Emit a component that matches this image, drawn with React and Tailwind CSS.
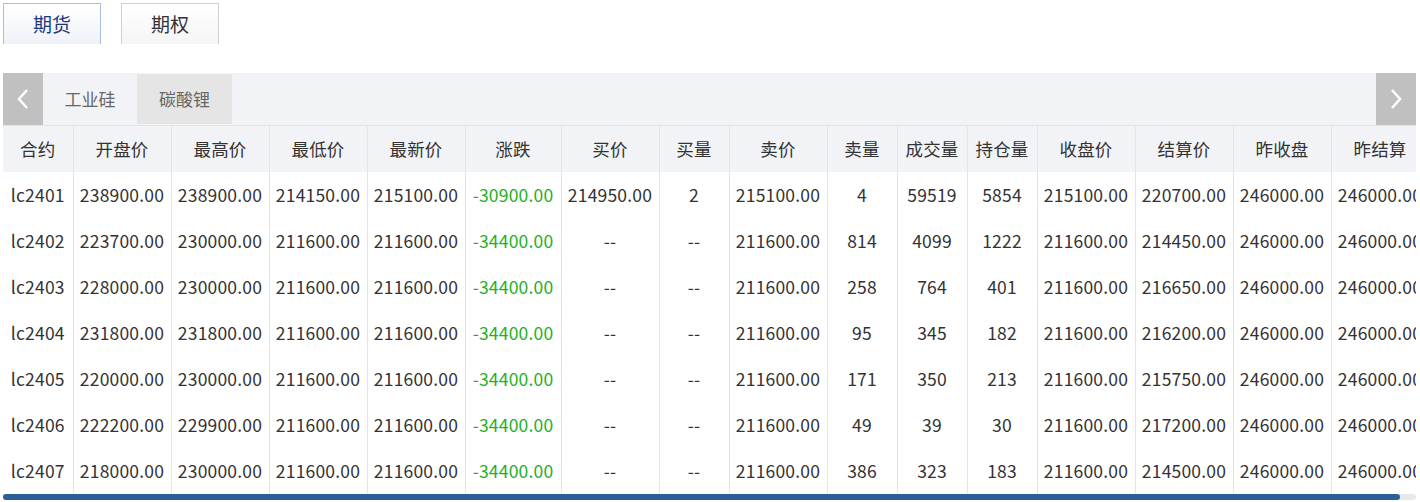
import React from "react";

const cols = [
  ["合约", 70], ["开盘价", 98], ["最高价", 98], ["最低价", 98], ["最新价", 98], ["涨跌", 96], ["买价", 98], ["买量", 70],
  ["卖价", 98], ["卖量", 70], ["成交量", 70], ["持仓量", 70], ["收盘价", 98], ["结算价", 98], ["昨收盘", 98], ["昨结算", 98],
];
const rows = [
  ["lc2401","238900.00","238900.00","214150.00","215100.00","-30900.00","214950.00","2","215100.00","4","59519","5854","215100.00","220700.00","246000.00","246000.00"],
  ["lc2402","223700.00","230000.00","211600.00","211600.00","-34400.00","--","--","211600.00","814","4099","1222","211600.00","214450.00","246000.00","246000.00"],
  ["lc2403","228000.00","230000.00","211600.00","211600.00","-34400.00","--","--","211600.00","258","764","401","211600.00","216650.00","246000.00","246000.00"],
  ["lc2404","231800.00","231800.00","211600.00","211600.00","-34400.00","--","--","211600.00","95","345","182","211600.00","216200.00","246000.00","246000.00"],
  ["lc2405","220000.00","230000.00","211600.00","211600.00","-34400.00","--","--","211600.00","171","350","213","211600.00","215750.00","246000.00","246000.00"],
  ["lc2406","222200.00","229900.00","211600.00","211600.00","-34400.00","--","--","211600.00","49","39","30","211600.00","217200.00","246000.00","246000.00"],
  ["lc2407","218000.00","230000.00","211600.00","211600.00","-34400.00","--","--","211600.00","386","323","183","211600.00","214500.00","246000.00","246000.00"],
];

export default function App() {
  return (
    <div className="w-[1420px] h-[502px] bg-white text-[#333] overflow-hidden" style={{ fontFamily: '"Noto Sans CJK SC","Noto Sans",sans-serif' }}>
      <div className="flex gap-5 pl-[3px] pt-[3px] h-[44px]">
        <div className="w-[98px] h-[41px] border border-b-0 border-[#a7bde0] bg-gradient-to-b from-white to-[#eef2f8] flex items-center justify-center text-[19px] text-[#1d3a7a]">期货</div>
        <div className="w-[98px] h-[41px] border border-b-0 border-[#d0d0d0] bg-gradient-to-b from-white to-[#f5f5f5] flex items-center justify-center text-[19px] text-[#333]">期权</div>
      </div>
      <div className="ml-[3px] mt-[29px] w-[1413px]">
        <div className="flex h-[53px] bg-[#f2f3f7] border-b border-[#e4e4e4]">
          <div className="w-[40px] bg-[#c0c0c0] flex items-center justify-center">
            <svg width="14" height="22" viewBox="0 0 14 22"><path d="M11 2 3 11l8 9" stroke="#fff" strokeWidth="2.5" fill="none" /></svg>
          </div>
          <div className="w-[94px] flex items-center justify-center text-[17px] text-[#666]">工业硅</div>
          <div className="w-[95px] flex items-center justify-center text-[17px] text-[#666] bg-[#e5e5e5] my-px">碳酸锂</div>
          <div className="flex-1" />
          <div className="w-[40px] bg-[#c0c0c0] flex items-center justify-center">
            <svg width="14" height="22" viewBox="0 0 14 22"><path d="M3 2l8 9-8 9" stroke="#fff" strokeWidth="2.5" fill="none" /></svg>
          </div>
        </div>
        <div className="overflow-hidden">
          <table className="border-collapse text-[17.5px] table-fixed tracking-[0.2px]" style={{ width: 1426 }}>
            <colgroup>{cols.map(([n, w]) => <col key={n} style={{ width: w }} />)}</colgroup>
            <thead>
              <tr className="h-[46px] bg-[#f2f3f7]">
                {cols.map(([n]) => <th key={n} className="font-normal border-r border-[#e4e4e4] whitespace-nowrap overflow-hidden">{n}</th>)}
              </tr>
            </thead>
            <tbody>
              {rows.map((r) => (
                <tr key={r[0]} className="h-[46px]">
                  {r.map((c, i) => (
                    <td key={i} className={`text-center whitespace-nowrap overflow-hidden border-r border-[#e4e4e4] ${i === 5 ? "text-[#25b01e]" : ""}`}>{c}</td>
                  ))}
                </tr>
              ))}
            </tbody>
          </table>
        </div>
        <div className="h-[6px] bg-[#e8e8e8] rounded-full">
          <div className="h-[6px] w-[1397px] bg-[#2c5f9a] rounded-full" />
        </div>
      </div>
    </div>
  );
}
